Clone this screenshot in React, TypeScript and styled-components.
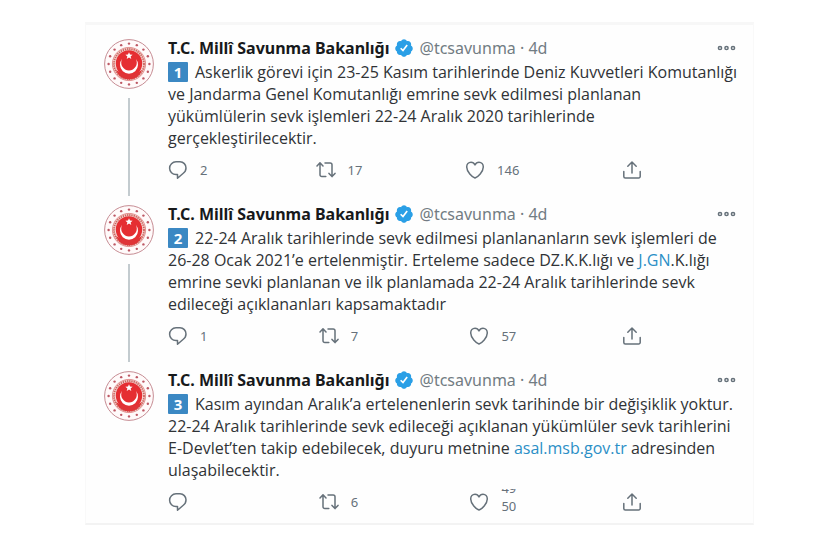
import React from "react";
import styled, { createGlobalStyle } from "styled-components";

const GlobalStyle = createGlobalStyle`
  *, *::before, *::after { box-sizing: border-box; }
  body {
    margin: 0;
    background: #ffffff;
    color: #303336;
    font-family: "Noto Sans", "Open Sans", sans-serif;
    font-size: 16px;
  }
`;

const Page = styled.main`
  padding: 22px 86px 24px 85px;
`;

const Thread = styled.section`
  padding: 12px 17px 0 18px;
  background: #fefefe;
  border: 1px solid #f9f9f9;
  border-top: 3px solid #f7f7f7;
  border-bottom: 2px solid #f3f3f3;
`;

const TweetRow = styled.article`
  display: flex;
  gap: 14px;
`;

const AvatarColumn = styled.div`
  display: flex;
  flex-direction: column;
  align-items: center;
  flex: 0 0 50px;
`;

const Emblem = styled.svg`
  display: block;
  width: 50px;
  height: 50px;
  margin-top: 2px;
`;

const Connector = styled.div`
  flex: 1;
  width: 2px;
  margin: 9px 0 7px;
  background: #c3cbcf;
`;

const Content = styled.div<{ $last: boolean }>`
  flex: 1;
  min-width: 0;
  padding-bottom: ${({ $last }) => ($last ? "11px" : "23px")};
`;

const Header = styled.header`
  display: flex;
  align-items: center;
  height: 22px;
  white-space: nowrap;
`;

const Name = styled.h2`
  margin: 0;
  font-size: 16px;
  line-height: 22px;
  font-weight: 700;
  color: #17191b;
`;

const Badge = styled.svg`
  width: 20px;
  height: 20px;
  margin: 0 6px 0 4px;
`;

const Meta = styled.span`
  color: #727c83;
  line-height: 22px;
`;

const MoreButton = styled.button`
  display: flex;
  margin-left: auto;
  padding: 0;
  border: 0;
  background: none;
  color: #66717a;
  cursor: pointer;
`;

const Body = styled.p`
  margin: 2px 0 11px;
  font-family: "Open Sans", "Noto Sans", sans-serif;
  line-height: 22px;
  white-space: nowrap;
`;

const Keycap = styled.span`
  display: inline-block;
  width: 20px;
  height: 20px;
  margin-right: 7px;
  border-radius: 1px;
  background: #3b88c3;
  color: #ffffff;
  font-size: 15px;
  font-weight: 700;
  line-height: 20px;
  text-align: center;
`;

const Link = styled.a`
  color: #2b8fc6;
  text-decoration: none;
`;

const Actions = styled.div`
  display: flex;
  justify-content: space-between;
  max-width: 474px;
  height: 20px;
`;

const Action = styled.button`
  display: flex;
  align-items: center;
  gap: 12px;
  height: 20px;
  padding: 0;
  border: 0;
  background: none;
  color: #66717a;
  font-family: inherit;
  font-size: 13px;
  line-height: 18px;
  cursor: pointer;
`;

const Count = styled.span`
  min-width: 13px;
  text-align: left;
`;

const Ticker = styled.span`
  display: flex;
  flex-direction: column;
  justify-content: flex-end;
  height: 26px;
  overflow: hidden;
  line-height: 18px;
`;

const Glyph = styled.svg`
  display: block;
  fill: none;
  stroke: currentColor;
  stroke-width: 1.5;
  stroke-linejoin: round;
  stroke-linecap: round;
`;

const studs = Array.from({ length: 16 }, (_, i) => {
  const angle = (i * Math.PI) / 8;
  return { x: 25 + 20.4 * Math.sin(angle), y: 25 - 20.4 * Math.cos(angle) };
});

const MinistryEmblem = () => (
  <Emblem viewBox="0 0 50 50" role="img" aria-label="Bakanlık arması">
    <circle cx="25" cy="25" r="24.4" fill="#fffafa" stroke="#c08088" strokeWidth="0.9" />
    {studs.map(({ x, y }) => (
      <circle key={`${x}-${y}`} cx={x} cy={y} r="1.2" fill="#bd5864" />
    ))}
    <circle cx="25" cy="25" r="16.6" fill="#f8dcda" stroke="#dc7b7a" strokeWidth="0.8" />
    <circle cx="25" cy="25" r="15" fill="none" stroke="#c9675f" strokeWidth="1.8" strokeDasharray="1.4 0.8" />
    <circle cx="25" cy="24.4" r="13.2" fill="#e52e32" />
    <path d="M12 31 Q25 39 38 31 Q35 40 25 40.5 Q15 40 12 31Z" fill="#df3437" />
    <path d="M18.2 19.8A9 9 0 1 0 31.8 19.8A7.8 7.8 0 1 1 18.2 19.8Z" fill="#fff" />
    <path d="M25 13.2l1 2.3 2.6.2-2 1.7.7 2.5-2.3-1.4-2.3 1.4.7-2.5-2-1.7 2.6-.2z" fill="#fff" />
  </Emblem>
);

const VerifiedBadge = () => (
  <Badge viewBox="0 0 24 24" role="img" aria-label="Onaylanmış hesap">
    <path
      fill="#2a9fe6"
      d="M22.5 12.5c0-1.58-.875-2.95-2.148-3.6.154-.435.238-.905.238-1.4 0-2.21-1.71-3.998-3.818-3.998-.47 0-.92.084-1.336.25C14.818 2.415 13.51 1.5 12 1.5s-2.816.917-3.437 2.25c-.415-.165-.866-.25-1.336-.25-2.11 0-3.818 1.79-3.818 4 0 .494.083.964.237 1.4-1.272.65-2.147 2.018-2.147 3.6 0 1.495.782 2.798 1.942 3.486-.02.17-.032.34-.032.514 0 2.21 1.708 4 3.818 4 .47 0 .92-.086 1.335-.25.62 1.334 1.926 2.25 3.437 2.25 1.512 0 2.818-.916 3.437-2.25.415.163.865.248 1.336.248 2.11 0 3.818-1.79 3.818-4 0-.174-.012-.344-.033-.513 1.158-.687 1.943-1.99 1.943-3.484z"
    />
    <path d="M8 12.3l2.8 2.8 5-6.6" fill="none" stroke="#fff" strokeWidth="2" />
  </Badge>
);

const MoreIcon = () => (
  <Glyph width="19" height="8" viewBox="0 0 19 8">
    <circle cx="3" cy="4" r="1.6" />
    <circle cx="9.5" cy="4" r="1.6" />
    <circle cx="16" cy="4" r="1.6" />
  </Glyph>
);

const ReplyIcon = () => (
  <Glyph width="20" height="20" viewBox="0 0 20 20">
    <path d="M8 1.8h4a6 6 0 0 1 6 6.2c0 2.4-1.200 4.200-3 5.500L9.500 18.200v-3.600H8A6.300 6.300 0 0 1 8 1.800z" />
  </Glyph>
);

const RetweetIcon = () => (
  <Glyph width="20" height="20" viewBox="0 0 20 20">
    <path d="M1 6L4 2.800l3 3.200M4 3.200v11.600a1.800 1.800 0 0 0 1.800 1.800h4M9 3h5.200a1.800 1.800 0 0 1 1.800 1.800v11.400M13 13.400l3 3.200 3-3.200" />
  </Glyph>
);

const HeartIcon = () => (
  <Glyph width="20" height="20" viewBox="0 0 20 20">
    <path d="M10 18C7.200 17 1.700 11.700 1.700 7.100 1.700 4.200 3.600 2.200 6 2.200c1.800 0 3.200 1 4 2.700.8-1.700 2.200-2.700 4-2.700 2.400 0 4.300 2 4.300 4.900C18.300 11.700 12.800 17 10 18z" />
  </Glyph>
);

const ShareIcon = () => (
  <Glyph width="20" height="20" viewBox="0 0 20 20">
    <path d="M10 13V2.200M5.800 6.200L10 2l4.200 4.200M1.800 11.500v5a1.500 1.500 0 0 0 1.500 1.500h13.400a1.500 1.500 0 0 0 1.500-1.500v-5" />
  </Glyph>
);

interface Tweet {
  number: number;
  lines: React.ReactNode[];
  replies?: string;
  retweets: string;
  likes: string[];
}

const tweets: Tweet[] = [
  {
    number: 1,
    lines: [
      "Askerlik görevi için 23-25 Kasım tarihlerinde Deniz Kuvvetleri Komutanlığı",
      "ve Jandarma Genel Komutanlığı emrine sevk edilmesi planlanan",
      "yükümlülerin sevk işlemleri 22-24 Aralık 2020 tarihlerinde",
      "gerçekleştirilecektir.",
    ],
    replies: "2",
    retweets: "17",
    likes: ["146"],
  },
  {
    number: 2,
    lines: [
      "22-24 Aralık tarihlerinde sevk edilmesi planlananların sevk işlemleri de",
      <>26-28 Ocak 2021’e ertelenmiştir. Erteleme sadece DZ.K.K.lığı ve <Link href="#jgn">J.GN</Link>.K.lığı</>,
      "emrine sevki planlanan ve ilk planlamada 22-24 Aralık tarihlerinde sevk",
      "edileceği açıklananları kapsamaktadır",
    ],
    replies: "1",
    retweets: "7",
    likes: ["57"],
  },
  {
    number: 3,
    lines: [
      "Kasım ayından Aralık’a ertelenenlerin sevk tarihinde bir değişiklik yoktur.",
      "22-24 Aralık tarihlerinde sevk edileceği açıklanan yükümlüler sevk tarihlerini",
      <>E-Devlet’ten takip edebilecek, duyuru metnine <Link href="#asal">asal.msb.gov.tr</Link> adresinden</>,
      "ulaşabilecektir.",
    ],
    retweets: "6",
    likes: ["49", "50"],
  },
];

const TweetItem = ({ tweet, last }: { tweet: Tweet; last: boolean }) => (
  <TweetRow>
    <AvatarColumn>
      <MinistryEmblem />
      {!last && <Connector />}
    </AvatarColumn>
    <Content $last={last}>
      <Header>
        <Name>T.C. Millî Savunma Bakanlığı</Name>
        <VerifiedBadge />
        <Meta>@tcsavunma · 4d</Meta>
        <MoreButton aria-label="Daha fazla"><MoreIcon /></MoreButton>
      </Header>
      <Body>
        <Keycap>{tweet.number}</Keycap>
        {tweet.lines.map((line, i) => (
          <React.Fragment key={i}>
            {i > 0 && <br />}
            {line}
          </React.Fragment>
        ))}
      </Body>
      <Actions>
        <Action aria-label="Yanıtla"><ReplyIcon /><Count>{tweet.replies}</Count></Action>
        <Action aria-label="Retweetle"><RetweetIcon /><Count>{tweet.retweets}</Count></Action>
        <Action aria-label="Beğen">
          <HeartIcon />
          {tweet.likes.length > 1 ? (
            <Ticker>{tweet.likes.map((value) => <span key={value}>{value}</span>)}</Ticker>
          ) : (
            <Count>{tweet.likes[0]}</Count>
          )}
        </Action>
        <Action aria-label="Paylaş"><ShareIcon /></Action>
      </Actions>
    </Content>
  </TweetRow>
);

export default function App() {
  return (
    <>
      <GlobalStyle />
      <Page>
        <Thread>
          {tweets.map((tweet, i) => (
            <TweetItem key={tweet.number} tweet={tweet} last={i === tweets.length - 1} />
          ))}
        </Thread>
      </Page>
    </>
  );
}
